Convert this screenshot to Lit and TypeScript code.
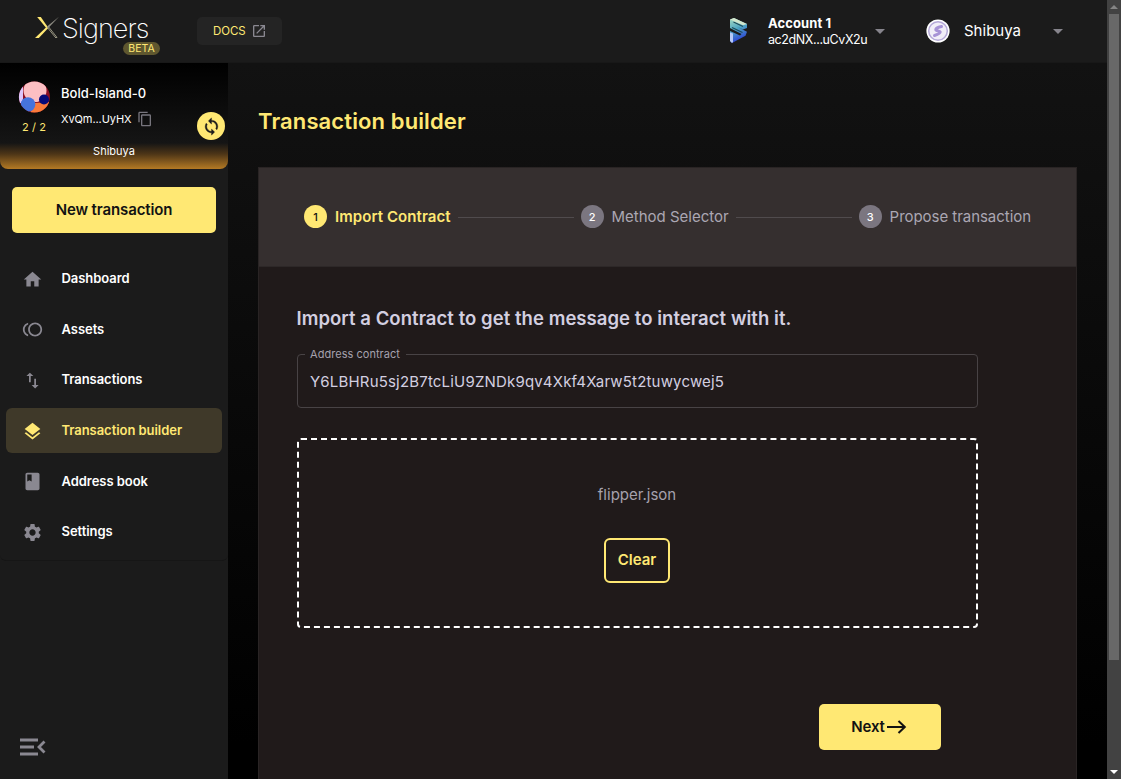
import { LitElement, html, css, svg } from "lit";
import { customElement, state } from "lit/decorators.js";
import { classMap } from "lit/directives/class-map.js";

const NAV = [
  { id: "dashboard", label: "Dashboard", icon: svg`<path d="M10 20v-6h4v6h5v-8h3L12 3 2 12h3v8z"/>` },
  { id: "assets", label: "Assets", icon: svg`<path d="M15 4c-4.42 0-8 3.58-8 8s3.58 8 8 8 8-3.58 8-8-3.58-8-8-8zm0 14c-3.31 0-6-2.69-6-6s2.69-6 6-6 6 2.69 6 6-2.69 6-6 6zM3 12c0-2.61 1.67-4.83 4-5.65V4.26C3.55 5.15 1 8.27 1 12s2.55 6.85 6 7.74v-2.09c-2.33-.82-4-3.04-4-5.65z"/>` },
  { id: "transactions", label: "Transactions", icon: svg`<path d="M16 17.01V10h-2v7.01h-3L15 21l4-3.99h-3zM9 3 5 6.99h3V14h2V6.99h3L9 3z"/>` },
  { id: "builder", label: "Transaction builder", icon: svg`<path d="m11.99 18.54-7.37-5.73L3 14.07l9 7 9-7-1.63-1.27-7.38 5.74zM12 16l7.36-5.73L21 9l-9-7-9 7 1.63 1.27L12 16z"/>` },
  { id: "book", label: "Address book", icon: svg`<path d="M18 2H6c-1.1 0-2 .9-2 2v16c0 1.1.9 2 2 2h12c1.100 0 2-.9 2-2V4c0-1.100-.9-2-2-2zM6 4h5v8l-2.500-1.500L6 12V4z"/>` },
  { id: "settings", label: "Settings", icon: svg`<path d="M19.140 12.940c.04-.3.06-.61.06-.94 0-.32-.02-.64-.07-.94l2.030-1.580c.18-.14.23-.41.12-.61l-1.920-3.320c-.12-.22-.37-.29-.59-.22l-2.390.96c-.5-.38-1.030-.7-1.620-.94l-.36-2.540c-.04-.24-.24-.41-.48-.41h-3.840c-.24 0-.43.17-.47.41l-.36 2.540c-.59.24-1.130.57-1.620.94l-2.390-.96c-.22-.08-.47 0-.59.22L2.740 8.870c-.12.21-.08.47.12.61l2.030 1.580c-.05.3-.09.63-.09.94s.02.64.07.94l-2.030 1.580c-.18.14-.23.41-.12.61l1.920 3.320c.12.22.37.29.59.22l2.390-.96c.5.38 1.030.7 1.620.94l.36 2.540c.05.24.24.41.48.41h3.840c.24 0 .44-.17.47-.41l.36-2.540c.59-.24 1.130-.56 1.620-.94l2.390.96c.22.08.47 0 .59-.22l1.920-3.320c.12-.22.07-.47-.12-.61l-2.010-1.580zM12 15.600c-1.980 0-3.600-1.620-3.600-3.600s1.620-3.600 3.600-3.600 3.600 1.620 3.600 3.600-1.620 3.600-3.600 3.600z"/>` },
];

const STEPS = ["Import Contract", "Method Selector", "Propose transaction"];

@customElement("app-root")
export class AppRoot extends LitElement {
  @state() private active = "builder";
  @state() private step = 0;

  static styles = css`
    :host { display: flex; width: 1121px; height: 779px; overflow: hidden; background: #000;
      font-family: "Inter", "Liberation Sans", sans-serif; color: #fff; white-space: nowrap; }
    * { box-sizing: border-box; }
    svg { display: block; flex: none; }
    button { font-family: inherit; border: 0; padding: 0; margin: 0; }
    .page { width: 1107px; display: flex; flex-direction: column; }
    .header { height: 63px; flex: none; background: #1b1b1b; display: flex; align-items: flex-start;
      border-bottom: 1px solid #181818; }
    .brand { position: relative; display: flex; padding: 16px 0 0 34px; width: 197px; }
    .wordmark { font-size: 27px; line-height: 26px; font-weight: 200; margin-left: 2px; letter-spacing: -0.95px; }
    .beta { position: absolute; left: 123px; top: 42px; width: 37px; height: 13px; border-radius: 7px;
      background: #5f572f; color: #ffe873; font-size: 10.500px; line-height: 13px; text-align: center; }
    .docs { margin-top: 17px; width: 85px; height: 28px; border-radius: 5px; background: #242424; color: #ffe873;
      display: flex; align-items: center; padding: 0 0 1px 16px; gap: 6px; font-size: 11.500px; letter-spacing: -0.1px; }
    .docs svg { fill: #8a8891; margin-top: 1px; }
    .account { display: flex; margin-left: 447px; padding-top: 15px; }
    .who { margin-left: 21px; width: 107px; }
    .who-name { font-size: 13px; font-weight: 700; line-height: 16px; letter-spacing: 0.1px; }
    .who-addr { font-size: 12.500px; line-height: 17px; letter-spacing: -0.4px; }
    .caret { margin-top: 14px; border: 5px solid transparent; border-top-color: #86848c; border-bottom: 0; height: 5px; }
    .network { display: flex; padding-top: 19px; margin-left: 41px; }
    .net-name { width: 89px; margin-left: 14px; font-size: 15px; line-height: 24px; }
    .network .caret { margin-top: 10px; }

    .body { flex: 1; display: flex; min-height: 0; }
    .sidebar { width: 228px; background: #1b1b1b; display: flex; flex-direction: column; }
    .wallet { height: 106px; flex: none; border-radius: 0 0 8px 8px; display: flex; flex-direction: column; overflow: hidden;
      background: linear-gradient(#000 0, #151515 80px, #4d3517 91px, #b47a24 106px); }
    .wallet-row { display: flex; padding: 18px 3px 0 18px; height: 80px; }
    .owner { width: 32px; display: flex; flex-direction: column; align-items: center; }
    .ratio { font-size: 11px; line-height: 14px; margin-top: 7px; color: #ffe873; letter-spacing: 0.1px; }
    .ident { flex: 1; margin-left: 11px; }
    .w-name { font-size: 13px; font-weight: 500; line-height: 16px; margin-top: 4px; }
    .w-addr { display: flex; gap: 6px; align-items: center; font-size: 11px; line-height: 16px; margin-top: 10px; letter-spacing: -0.08px; }
    .sync { width: 28px; height: 28px; border-radius: 50%; background: #ffe873; margin-top: 31px;
      display: flex; align-items: center; justify-content: center; }
    .w-net { font-size: 11px; line-height: 14px; text-align: center; margin-top: 1px; }
    .new { margin: 18px 12px 0; height: 46px; flex: none; width: 204px; border-radius: 5px; background: #ffe873; color: #121212;
      font-size: 15px; font-weight: 600; letter-spacing: -0.12px; padding-bottom: 2px; }
    .nav { margin-top: 20px; height: 308px; flex: none; border-bottom: 1px solid #161616; border-radius: 0 0 6px 6px; display: flex; flex-direction: column;
      gap: 5.700px; padding: 3px 6px 0; }
    .item { height: 45px; flex: none; border-radius: 6px; display: flex; align-items: center; padding-left: 15.500px; gap: 19px;
      font-size: 13px; font-weight: 600; letter-spacing: -0.05px; }
    .item span { margin-bottom: 1px; }
    .item svg { fill: #8a8891; width: 21px; height: 21px; margin-top: 1px; }
    .item.on { background: #3f3929; color: #ffe873; }
    .item.on svg { fill: #ffe873; }
    .collapse { margin: auto 0 18px 15px; }

    .main { flex: 1; background: linear-gradient(#121212, #000 95%); padding: 43px 30px 0; display: flex; flex-direction: column; }
    .title { margin: 0; font-size: 22px; line-height: 30px; font-weight: 600; letter-spacing: 0.12px; color: #ffe873; }
    .panel { margin-top: 31px; flex: 1; background: #201a1a; border: 1px solid #292424; border-bottom: 0; }
    .stepper { height: 99px; background: #352f2f; border-bottom: 1px solid #2d2828; display: flex; align-items: center; padding: 0 45px 0 45px; }
    .step { display: flex; align-items: center; gap: 8px; font-size: 15px; color: #aba7b3; }
    .step:last-child { letter-spacing: -0.04px; }
    .label { margin-bottom: 2px; }
    .dot { width: 23px; height: 23px; border-radius: 50%; background: #7b7680; color: #fff; font-size: 11px; font-weight: 500;
      display: flex; align-items: center; justify-content: center; margin-bottom: 1px; }
    .step.on { color: #ffe873; font-weight: 600; letter-spacing: 0.07px; }
    .step.on .dot { background: #ffe873; color: #121212; }
    .line { flex: 1; height: 1px; background: #504b4d; margin: 0 7px; }
    .content { padding: 38px 98.500px 0 37.500px; display: flex; flex-direction: column; }
    .lead { margin: 0; font-size: 18.500px; line-height: 26px; font-weight: 600; letter-spacing: 0.05px; color: #d3cfe0; }
    .field { margin: 17px 0 0; height: 60px; min-width: 0; border: 1px solid #484345; border-radius: 4px; padding: 0 12.500px; color: #d3cfe0; }
    .field legend { margin-left: -5px; padding: 0 6px 0 5px; font-size: 11px; line-height: 12px; color: #a5a1ad; letter-spacing: 0.04px; }
    .value { font-size: 15px; line-height: 20px; margin-top: 12px; letter-spacing: 0.18px; }
    .drop { margin-top: 30px; height: 190px; border: 2px dashed #fff; border-radius: 4px; display: flex; flex-direction: column; align-items: center; }
    .file { font-size: 15px; line-height: 20px; margin-top: 45px; color: #a5a1ad; }
    .clear { margin-top: 33px; width: 66px; height: 45px; border: 2px solid #ffe873; border-radius: 6px; background: none; color: #ffe873;
      font-size: 15px; font-weight: 600; padding-bottom: 3px; }
    .next { align-self: flex-end; margin: 76px 37px 0 0; width: 122px; height: 46px; border-radius: 5px; background: #ffe873; color: #121212;
      font-size: 15px; font-weight: 600; letter-spacing: -0.1px; display: flex; align-items: center; justify-content: center; gap: 1px; padding: 0 1px 1px 0; }
    .scroll { width: 14px; background: #424242; display: flex; flex-direction: column; align-items: center; }
    .up { margin-top: 5px; border: 4px solid transparent; border-bottom-color: #858585; border-top: 0; }
    .thumb { width: 10px; height: 646px; margin-top: 5px; background: #686868; }
    .down { margin: auto 0 5px; border: 4px solid transparent; border-top-color: #fff; border-bottom: 0; }
  `;

  render() {
    return html`
      <div class="page">
        <header class="header">
          <div class="brand">
            <svg width="26" height="23" viewBox="0 0 26 23">
              <path d="M3.200 1h3.600l6.600 9.500-1.200 1.600z" fill="#ffe873"/>
              <path d="M1 22L13 10.500l1.300 1.500L4.800 22z" fill="#ffe873"/>
              <path d="M13 10.500L25 .8 14.300 12z" fill="#8f8d84"/>
              <path d="M13 11l8.500 10.500M14.300 10.500L23 21.500h-2" stroke="#a39f8a" stroke-width=".9" fill="none"/>
            </svg>
            <span class="wordmark">Signers</span>
            <span class="beta">BETA</span>
          </div>
          <div class="docs"><span>DOCS</span>
            <svg width="16" height="16" viewBox="0 0 24 24"><path d="M19 19H5V5h7V3H5c-1.110 0-2 .9-2 2v14c0 1.100.89 2 2 2h14c1.100 0 2-.9 2-2v-7h-2v7zM14 3v2h3.590l-9.830 9.830 1.410 1.410L19 6.410V10h2V3h-7z"/></svg>
          </div>
          <div class="account">
            <svg width="18" height="29" viewBox="0 0 18 29">
              <defs><linearGradient id="s" x1="0" y1="0" x2="0.300" y2="1"><stop offset="0" stop-color="#a9dcc0"/><stop offset=".5" stop-color="#4ea6c4"/><stop offset="1" stop-color="#2b3fd6"/></linearGradient></defs>
              <path d="M1 4.500L5 3l13 6v4l-4 1.500-6-2.700 10 5-1.500 4L3 28l-2-2V16l10 4.500 1.500-1.500L1 13z" fill="url(#s)"/>
              <path d="M4.500 7l9.500 4.500M3 12.500l10.500 5" stroke="#1d4a58" stroke-width="1.200"/>
              <path d="M1 4.500L5 3l13 6-4 1.200z" fill="#d3e6cd"/>
              <path d="M1 17.500l3 .9V27l-1 1-2-2z" fill="#b7c9f5"/>
            </svg>
            <div class="who"><div class="who-name">Account 1</div><div class="who-addr">ac2dNX...uCvX2u</div></div>
            <span class="caret"></span>
          </div>
          <div class="network">
            <svg width="24" height="24" viewBox="0 0 24 24">
              <circle cx="12" cy="12" r="11.600" fill="#fff"/><circle cx="12" cy="12" r="9.300" fill="#f1eef8" stroke="#b5a9d8" stroke-width="1.500"/>
              <path d="M15.500 7.500c-3.200.6-5.700 2-5.700 3.200 0 1.300 4.400 1 4.400 2.400 0 1.200-2.700 2.500-5.700 3.400" fill="none" stroke="#a793d6" stroke-width="3" stroke-linecap="round"/>
            </svg>
            <span class="net-name">Shibuya</span><span class="caret"></span>
          </div>
        </header>
        <div class="body">
          <aside class="sidebar">
            <div class="wallet">
              <div class="wallet-row">
                <div class="owner">
                  <svg width="32" height="32" viewBox="0 0 32 32">
                    <defs><clipPath id="av"><circle cx="16.400" cy="16" r="15.500"/></clipPath></defs>
                    <g clip-path="url(#av)"><rect width="32" height="32" fill="#8c1024"/><path d="M0 4h5v18H0z" fill="#ddc5fa"/>
                    <path d="M12 32l5-10 15-1v11z" fill="#fa7a3b"/><circle cx="17" cy="9.500" r="11.500" fill="#fcbfc3"/>
                    <circle cx="26" cy="18.500" r="5" fill="#060a78"/><circle cx="10" cy="23.500" r="7.300" fill="#4673dc"/></g>
                  </svg>
                  <span class="ratio">2 / 2</span>
                </div>
                <div class="ident">
                  <div class="w-name">Bold-Island-0</div>
                  <div class="w-addr"><span>XvQm...UyHX</span>
                    <svg width="16" height="16" viewBox="0 0 24 24" fill="#77757d"><path d="M16 1H4c-1.100 0-2 .9-2 2v14h2V3h12V1zm3 4H8c-1.100 0-2 .9-2 2v14c0 1.100.9 2 2 2h11c1.100 0 2-.9 2-2V7c0-1.100-.9-2-2-2zm0 16H8V7h11v14z"/></svg>
                  </div>
                </div>
                <div class="sync">
                  <svg width="19" height="19" viewBox="0 0 24 24" fill="#1b1b1b" stroke="#1b1b1b" stroke-width=".4"><path d="M12 4V1L8 5l4 4V6c3.310 0 6 2.690 6 6 0 1.010-.25 1.970-.7 2.800l1.460 1.460C19.540 15.030 20 13.570 20 12c0-4.420-3.580-8-8-8zm0 14c-3.310 0-6-2.690-6-6 0-1.010.25-1.970.7-2.800L5.240 7.740C4.460 8.970 4 10.430 4 12c0 4.420 3.580 8 8 8v3l4-4-4-4v3z"/></svg>
                </div>
              </div>
              <div class="w-net">Shibuya</div>
            </div>
            <button class="new">New transaction</button>
            <nav class="nav">
              ${NAV.map((n) => html`<div class=${classMap({ item: true, on: n.id === this.active })} @click=${() => (this.active = n.id)}>
                <svg viewBox="0 0 24 24">${n.icon}</svg><span>${n.label}</span></div>`)}
            </nav>
            <svg class="collapse" width="34" height="28" viewBox="0 0 34 28" fill="none" stroke="#8a8891" stroke-width="2.800"><path d="M5 7h18M5 14h14M5 21h18M29.500 8.500L24 14l5.500 5.500"/></svg>
          </aside>
          <main class="main">
            <h1 class="title">Transaction builder</h1>
            <section class="panel">
              <div class="stepper">
                ${STEPS.map((s, i) => html`${i ? html`<span class="line"></span>` : ""}
                  <div class=${classMap({ step: true, on: i === this.step })}><span class="dot">${i + 1}</span><span class="label">${s}</span></div>`)}
              </div>
              <div class="content">
                <h2 class="lead">Import a Contract to get the message to interact with it.</h2>
                <fieldset class="field"><legend>Address contract</legend><div class="value">Y6LBHRu5sj2B7tcLiU9ZNDk9qv4Xkf4Xarw5t2tuwycwej5</div></fieldset>
                <div class="drop"><span class="file">flipper.json</span><button class="clear">Clear</button></div>
                <button class="next"><span>Next</span>
                  <svg width="21" height="16" viewBox="0 0 21 16" fill="none" stroke="#121212" stroke-width="2"><path d="M1 8h18M12.500 2l6.300 6-6.300 6"/></svg>
                </button>
              </div>
            </section>
          </main>
        </div>
      </div>
      <div class="scroll"><span class="up"></span><span class="thumb"></span><span class="down"></span></div>
    `;
  }
}
